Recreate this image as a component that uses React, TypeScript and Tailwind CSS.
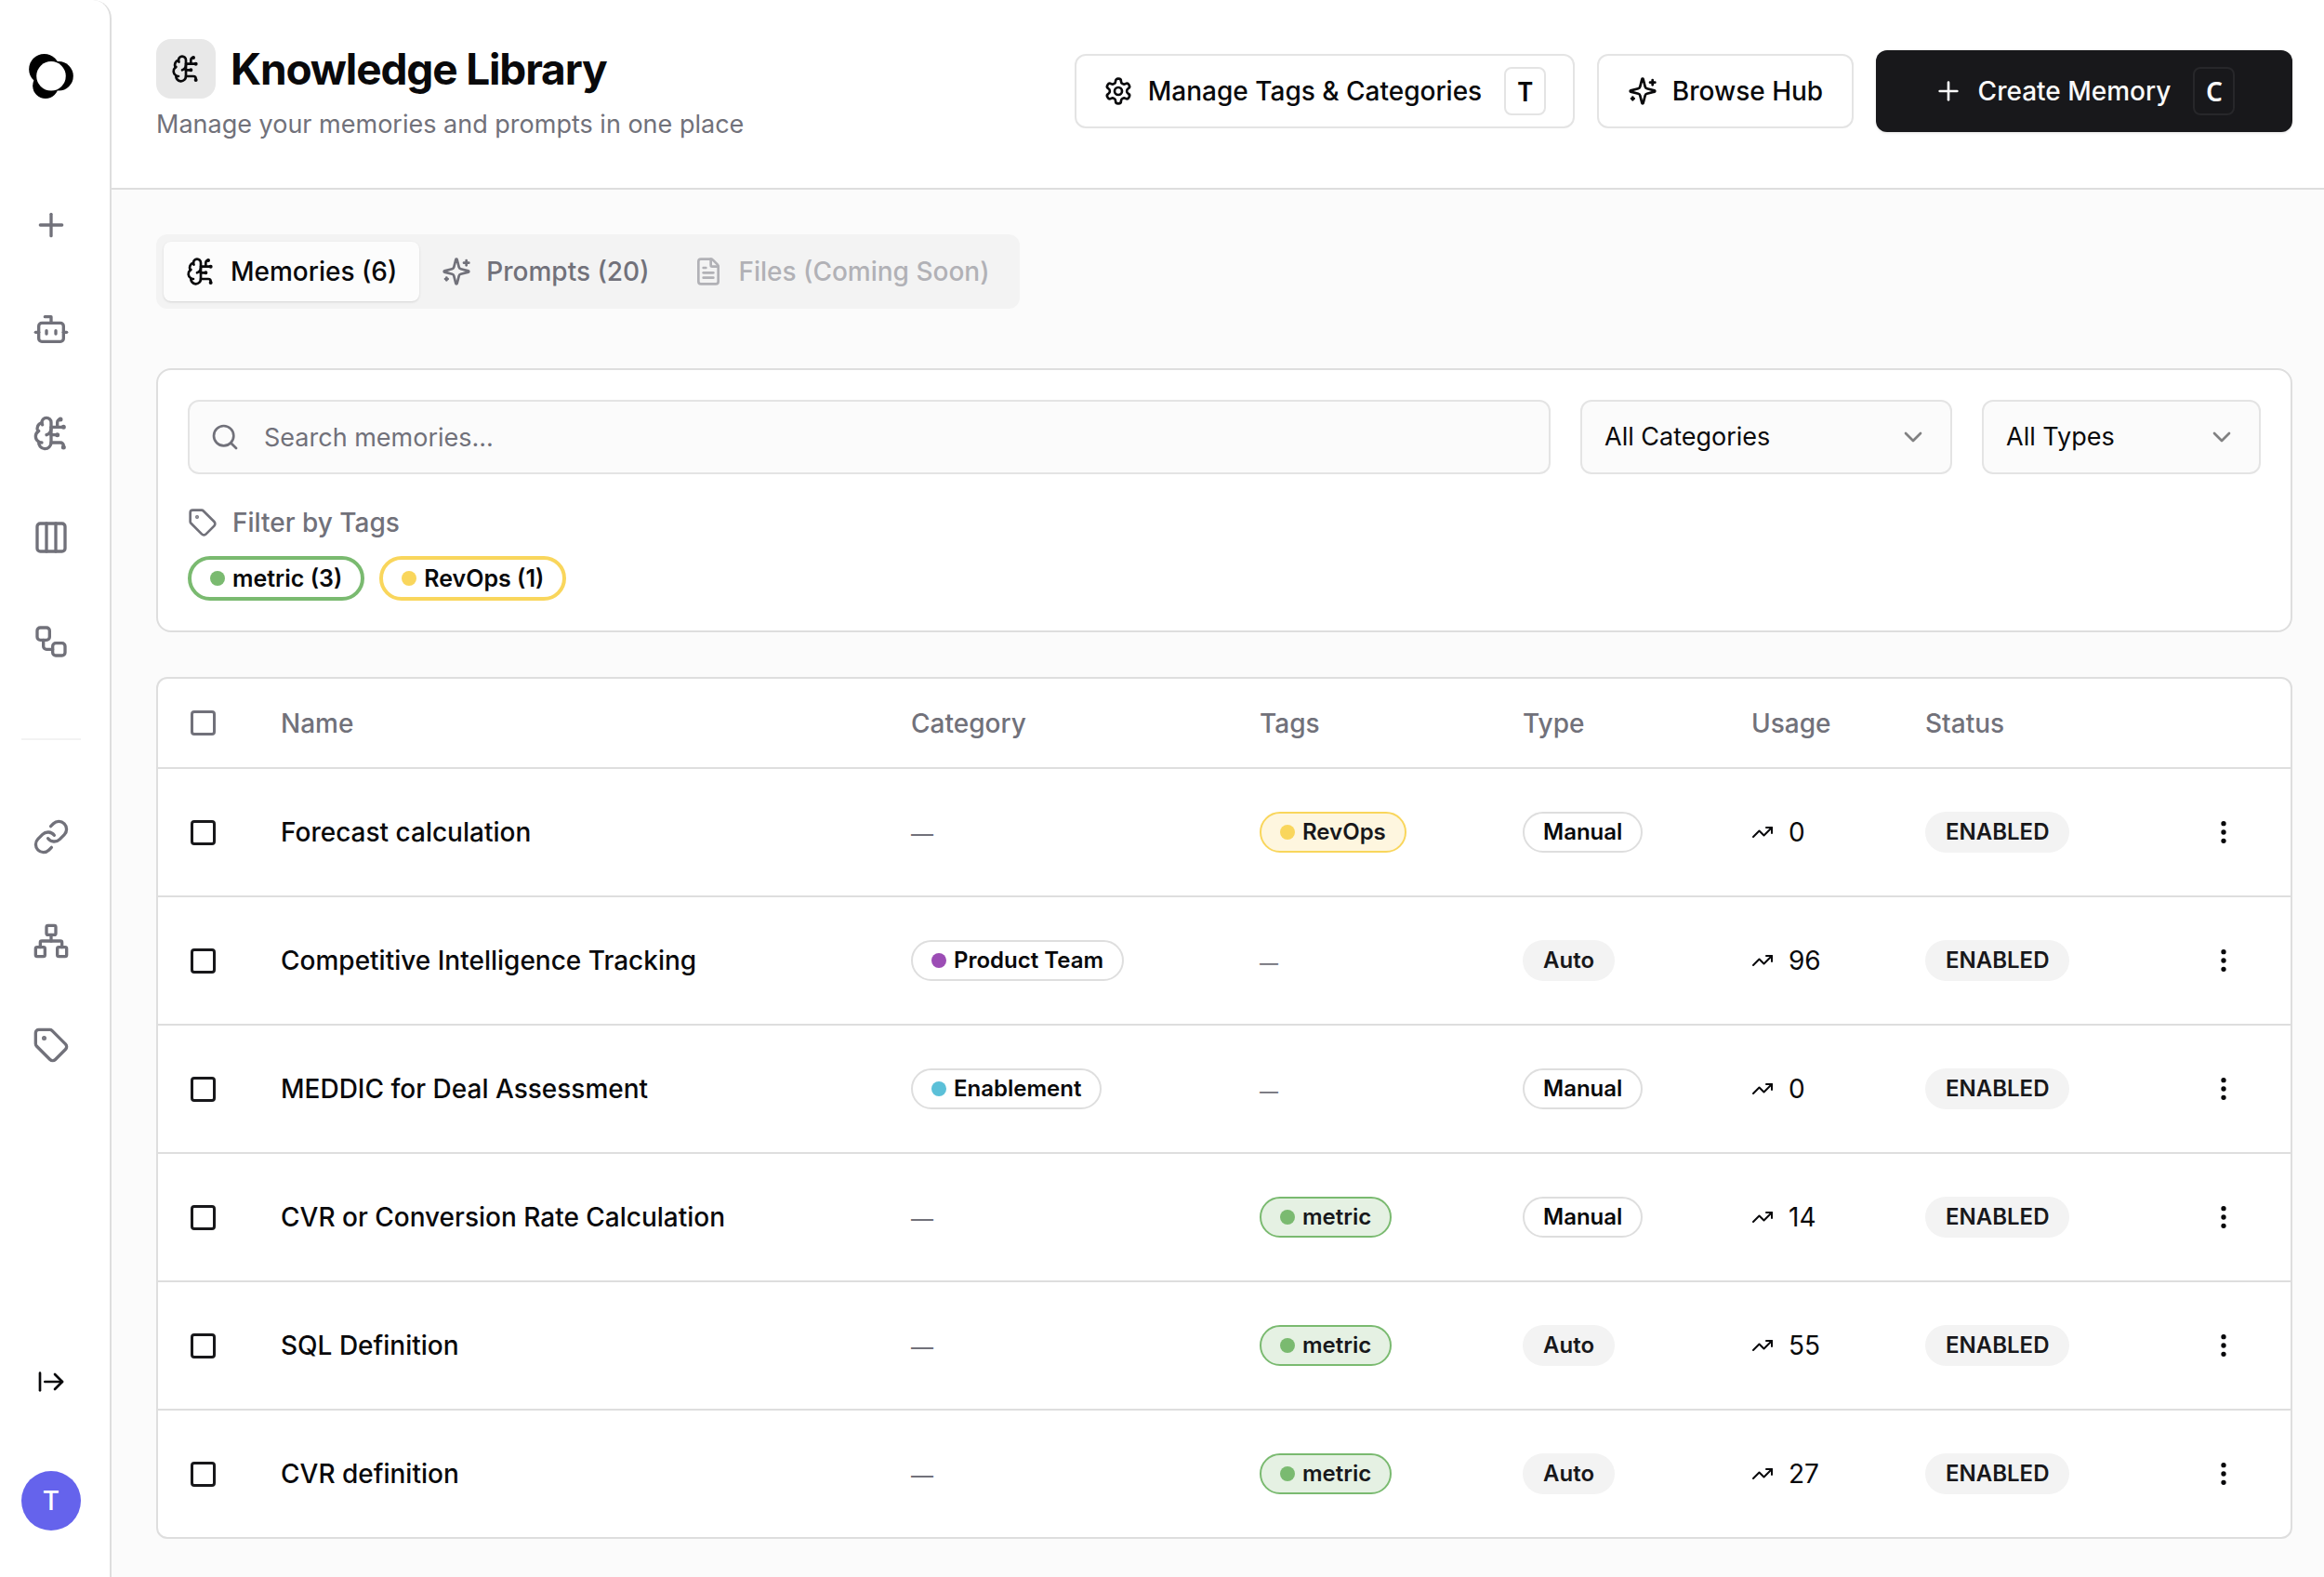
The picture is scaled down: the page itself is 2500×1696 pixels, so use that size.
import React from 'react'
import {
  ArrowRightFromLine,
  Bot,
  BrainCircuit,
  ChevronDown,
  Columns3,
  EllipsisVertical,
  FileText,
  Link,
  Network,
  Plus,
  Search,
  Tag,
  TrendingUp,
  Workflow,
} from 'lucide-react'
import type { LucideIcon } from 'lucide-react'

type TagName = 'metric' | 'RevOps'

interface Memory {
  name: string
  category?: { label: string; dot: string }
  tag?: TagName
  type: 'Manual' | 'Auto'
  usage: number
}

const memories: Memory[] = [
  { name: 'Forecast calculation', tag: 'RevOps', type: 'Manual', usage: 0 },
  {
    name: 'Competitive Intelligence Tracking',
    category: { label: 'Product Team', dot: 'bg-[#9c4db5]' },
    type: 'Auto',
    usage: 96,
  },
  {
    name: 'MEDDIC for Deal Assessment',
    category: { label: 'Enablement', dot: 'bg-[#5bc0d8]' },
    type: 'Manual',
    usage: 0,
  },
  { name: 'CVR or Conversion Rate Calculation', tag: 'metric', type: 'Manual', usage: 14 },
  { name: 'SQL Definition', tag: 'metric', type: 'Auto', usage: 55 },
  { name: 'CVR definition', tag: 'metric', type: 'Auto', usage: 27 },
]

const tagStyles: Record<TagName, { badge: string; border: string; dot: string }> = {
  metric: { badge: 'bg-[#e5f1e3] border-[#7aba70]', border: 'border-[#7aba70]', dot: 'bg-[#7aba70]' },
  RevOps: { badge: 'bg-[#fef6df] border-[#f9d65c]', border: 'border-[#f9d65c]', dot: 'bg-[#f9d65c]' },
}

const primaryNav: { label: string; icon: LucideIcon }[] = [
  { label: 'New', icon: Plus },
  { label: 'Agents', icon: Bot },
  { label: 'Knowledge', icon: BrainCircuit },
  { label: 'Boards', icon: Columns3 },
  { label: 'Workflows', icon: Workflow },
]

const secondaryNav: { label: string; icon: LucideIcon }[] = [
  { label: 'Integrations', icon: Link },
  { label: 'Organization', icon: Network },
  { label: 'Tags', icon: Tag },
]

function Logo() {
  return (
    <svg viewBox="51 66 142 143" className="h-12 w-12" aria-hidden="true">
      <circle cx="100" cy="115" r="49" />
      <circle cx="146" cy="137" r="47" />
      <circle cx="104" cy="168" r="41" />
      <circle cx="122" cy="137" r="47" fill="#fff" />
    </svg>
  )
}

function SparklesIcon() {
  return (
    <svg
      viewBox="0 0 24 24"
      className="h-8 w-8"
      fill="none"
      stroke="currentColor"
      strokeWidth="2"
      strokeLinecap="round"
      strokeLinejoin="round"
      aria-hidden="true"
    >
      <path d="M9.937 15.5A2 2 0 0 0 8.5 14.063l-6.135-1.582a.5.5 0 0 1 0-.962L8.5 9.936A2 2 0 0 0 9.937 8.5l1.582-6.135a.5.5 0 0 1 .963 0L14.063 8.5A2 2 0 0 0 15.5 9.937l6.135 1.581a.5.5 0 0 1 0 .964L15.5 14.063a2 2 0 0 0-1.437 1.437l-1.582 6.135a.5.5 0 0 1-.963 0z" />
      <path d="M20 3v4" />
      <path d="M22 5h-4" />
      <path d="M4 17v2" />
      <path d="M5 18H3" />
    </svg>
  )
}

function GearIcon() {
  return (
    <svg
      viewBox="0 0 24 24"
      className="h-8 w-8"
      fill="none"
      stroke="currentColor"
      strokeWidth="2"
      strokeLinecap="round"
      strokeLinejoin="round"
      aria-hidden="true"
    >
      <path d="M12.22 2h-.44a2 2 0 0 0-2 2v.18a2 2 0 0 1-1 1.73l-.43.25a2 2 0 0 1-2 0l-.15-.08a2 2 0 0 0-2.73.73l-.22.38a2 2 0 0 0 .73 2.73l.15.1a2 2 0 0 1 1 1.72v.51a2 2 0 0 1-1 1.74l-.15.09a2 2 0 0 0-.73 2.73l.22.38a2 2 0 0 0 2.73.73l.15-.08a2 2 0 0 1 2 0l.43.25a2 2 0 0 1 1 1.73V20a2 2 0 0 0 2 2h.44a2 2 0 0 0 2-2v-.18a2 2 0 0 1 1-1.73l.43-.25a2 2 0 0 1 2 0l.15.08a2 2 0 0 0 2.73-.73l.22-.39a2 2 0 0 0-.73-2.73l-.15-.08a2 2 0 0 1-1-1.74v-.5a2 2 0 0 1 1-1.74l.15-.09a2 2 0 0 0 .73-2.73l-.22-.38a2 2 0 0 0-2.73-.73l-.15.08a2 2 0 0 1-2 0l-.43-.25a2 2 0 0 1-1-1.73V4a2 2 0 0 0-2-2z" />
      <circle cx="12" cy="12" r="3" />
    </svg>
  )
}

function NavItem({ label, icon: Icon }: { label: string; icon: LucideIcon }) {
  return (
    <a href="#" aria-label={label} className="flex h-16 w-16 items-center justify-center text-[#71717a]">
      <Icon className="h-10 w-10" />
    </a>
  )
}

function Sidebar() {
  return (
    <aside className="flex w-[120px] shrink-0 flex-col items-center rounded-tr-[20px] border-r-2 border-[#dedede] bg-white pr-2 pt-[58px] pb-[50px]">
      <Logo />
      <nav className="mt-[104px] flex flex-col items-center gap-12">
        {primaryNav.map((item) => (
          <NavItem key={item.label} {...item} />
        ))}
      </nav>
      <hr className="mt-[72px] w-16 border-t-2 border-[#f3f3f3]" />
      <nav className="mt-[72px] flex flex-col items-center gap-12">
        {secondaryNav.map((item) => (
          <NavItem key={item.label} {...item} />
        ))}
      </nav>
      <button type="button" aria-label="Expand sidebar" className="mt-auto flex h-16 w-16 items-center justify-center">
        <ArrowRightFromLine className="h-8 w-8" />
      </button>
      <button
        type="button"
        className="mt-16 flex h-16 w-16 items-center justify-center rounded-full bg-[#6563ec] font-medium text-white"
      >
        T
      </button>
    </aside>
  )
}

function Kbd({ children, className }: { children: React.ReactNode; className: string }) {
  return (
    <kbd
      className={`ml-2 flex h-[52px] w-[45px] items-center justify-center rounded-lg border-2 font-['Noto_Sans',sans-serif] text-[28px] font-semibold ${className}`}
    >
      {children}
    </kbd>
  )
}

function Header() {
  return (
    <header className="flex items-center justify-between border-b-2 border-[#dedede] bg-white pt-[42px] pr-[34px] pb-12 pl-12">
      <div>
        <div className="flex items-center gap-4">
          <div className="flex h-16 w-16 items-center justify-center rounded-2xl bg-[#e8e8e8]">
            <BrainCircuit className="h-8 w-8" />
          </div>
          <h1 className="text-[46px] font-bold tracking-tight">Knowledge Library</h1>
        </div>
        <p className="mt-2 text-[27px] leading-10 text-[#71717a]">Manage your memories and prompts in one place</p>
      </div>
      <div className="flex items-center gap-6 font-medium">
        <button
          type="button"
          className="flex h-20 w-[538px] items-center justify-center gap-4 rounded-xl border-2 border-[#e4e4e4]"
        >
          <GearIcon />
          Manage Tags &amp; Categories
          <Kbd className="border-[#e4e4e4]">T</Kbd>
        </button>
        <button
          type="button"
          className="flex h-20 w-[276px] items-center justify-center gap-4 rounded-xl border-2 border-[#e4e4e4]"
        >
          <SparklesIcon />
          Browse Hub
        </button>
        <button
          type="button"
          className="flex h-[88px] w-[448px] items-center justify-center gap-4 rounded-xl bg-[#18181b] text-[#fafafa] shadow-sm"
        >
          <Plus className="h-8 w-8" />
          Create Memory
          <Kbd className="border-[#27272a]">C</Kbd>
        </button>
      </div>
    </header>
  )
}

function Tabs() {
  return (
    <div role="tablist" className="flex w-fit items-center rounded-xl bg-[#f3f3f3] p-2 font-medium text-[#71717a]">
      <button
        type="button"
        role="tab"
        aria-selected="true"
        className="flex h-16 items-center gap-4 rounded-lg bg-[#fcfcfc] px-6 text-[#09090b] shadow-sm"
      >
        <BrainCircuit className="h-8 w-8" />
        Memories (6)
      </button>
      <button type="button" role="tab" aria-selected="false" className="flex h-16 items-center gap-4 px-6">
        <SparklesIcon />
        Prompts (20)
      </button>
      <button
        type="button"
        role="tab"
        aria-selected="false"
        disabled
        className="flex h-16 items-center gap-4 px-6 opacity-50"
      >
        <FileText className="h-8 w-8" />
        Files (Coming Soon)
      </button>
    </div>
  )
}

function FilterSelect({ label, option, className }: { label: string; option: string; className: string }) {
  return (
    <div className={`relative ${className}`}>
      <select
        aria-label={label}
        className="h-20 w-full appearance-none rounded-xl border-2 border-[#e4e4e4] bg-[#fbfbfb] px-6 text-[27px]"
      >
        <option>{option}</option>
      </select>
      <ChevronDown className="pointer-events-none absolute top-6 right-[26px] h-8 w-8 opacity-50" />
    </div>
  )
}

function TagFilter({ name, count }: { name: TagName; count: number }) {
  return (
    <button
      type="button"
      className={`flex h-12 items-center gap-2 rounded-full border-4 px-5 text-[25px] font-semibold ${tagStyles[name].border}`}
    >
      <span className={`h-4 w-4 rounded-full ${tagStyles[name].dot}`} />
      {name} ({count})
    </button>
  )
}

function Filters() {
  return (
    <section className="mt-16 rounded-2xl border-2 border-[#dedede] bg-white p-8">
      <div className="flex gap-8">
        <div className="relative flex-1">
          <Search className="absolute top-6 left-6 h-8 w-8 text-[#71717a]" />
          <input
            type="search"
            aria-label="Search memories"
            placeholder="Search memories..."
            className="h-20 w-full rounded-xl border-2 border-[#e4e4e4] bg-[#fbfbfb] pr-6 pl-20 text-[27px] placeholder:text-[#71717a]"
          />
        </div>
        <FilterSelect label="Category" option="All Categories" className="w-[400px]" />
        <FilterSelect label="Type" option="All Types" className="w-[300px]" />
      </div>
      <div className="mt-8 flex items-center gap-4 leading-10 font-medium text-[#71717a]">
        <Tag className="h-8 w-8" />
        Filter by Tags
      </div>
      <div className="mt-4 flex gap-4">
        <TagFilter name="metric" count={3} />
        <TagFilter name="RevOps" count={1} />
      </div>
    </section>
  )
}

function Badge({ children, dot, className }: { children: React.ReactNode; dot?: string; className: string }) {
  return (
    <span
      className={`flex h-11 w-fit items-center gap-2 rounded-full border-2 px-5 text-2xl font-semibold ${className}`}
    >
      {dot && <span className={`h-4 w-4 rounded-full ${dot}`} />}
      {children}
    </span>
  )
}

function Checkbox({ label, className }: { label: string; className: string }) {
  return (
    <label className="flex h-8 w-8 items-center justify-center">
      <input
        type="checkbox"
        aria-label={label}
        className={`h-[27px] w-[27px] appearance-none rounded-[4px] border-3 ${className}`}
      />
    </label>
  )
}

function MemoryRow({ memory }: { memory: Memory }) {
  const { name, category, tag, type, usage } = memory
  return (
    <tr className="h-[138px] *:border-b-2 *:border-[#dedede] *:px-8 last:h-[136px] last:*:border-b-0">
      <td>
        <Checkbox label={`Select ${name}`} className="border-[#18181b]" />
      </td>
      <td className="font-medium">{name}</td>
      <td>
        {category ? (
          <Badge dot={category.dot} className="border-[#dedede]">
            {category.label}
          </Badge>
        ) : (
          <span className="text-2xl text-[#71717a]">—</span>
        )}
      </td>
      <td>
        {tag ? (
          <Badge dot={tagStyles[tag].dot} className={`text-[#18181b] ${tagStyles[tag].badge}`}>
            {tag}
          </Badge>
        ) : (
          <span className="text-xl text-[#71717a]">—</span>
        )}
      </td>
      <td>
        <Badge className={type === 'Manual' ? 'border-[#dedede]' : 'border-transparent bg-[#f3f3f3] text-[#18181b]'}>
          {type}
        </Badge>
      </td>
      <td>
        <div className="flex items-center gap-4">
          <TrendingUp className="h-6 w-6" />
          {usage}
        </div>
      </td>
      <td>
        <Badge className="border-transparent bg-[#f3f3f3] text-[#18181b]">ENABLED</Badge>
      </td>
      <td>
        <button
          type="button"
          aria-label={`Actions for ${name}`}
          className="flex h-16 w-20 items-center justify-center"
        >
          <EllipsisVertical className="h-8 w-8" />
        </button>
      </td>
    </tr>
  )
}

function MemoryTable() {
  return (
    <div className="mt-12 overflow-hidden rounded-xl border-2 border-[#dedede] bg-white">
      <table className="w-full table-fixed border-separate border-spacing-0 text-left">
        <thead>
          <tr className="h-[97px] text-[#71717a] *:border-b-2 *:border-[#dedede] *:px-8 *:font-medium">
            <th className="w-[100px]">
              <Checkbox label="Select all memories" className="border-[#71717a]" />
            </th>
            <th>Name</th>
            <th className="w-[375px]">Category</th>
            <th className="w-[283px]">Tags</th>
            <th className="w-[246px]">Type</th>
            <th className="w-[187px]">Usage</th>
            <th className="w-[281px]">Status</th>
            <th className="w-36" aria-label="Actions" />
          </tr>
        </thead>
        <tbody>
          {memories.map((memory) => (
            <MemoryRow key={memory.name} memory={memory} />
          ))}
        </tbody>
      </table>
    </div>
  )
}

export default function App() {
  return (
    <div className="flex min-h-screen bg-white font-['Inter',sans-serif] text-[28px] leading-10 text-[#09090b]">
      <Sidebar />
      <div className="flex min-w-0 flex-1 flex-col">
        <Header />
        <main className="flex-1 bg-[#fbfbfb] pt-12 pr-[34px] pb-10 pl-12">
          <Tabs />
          <Filters />
          <MemoryTable />
        </main>
      </div>
    </div>
  )
}
